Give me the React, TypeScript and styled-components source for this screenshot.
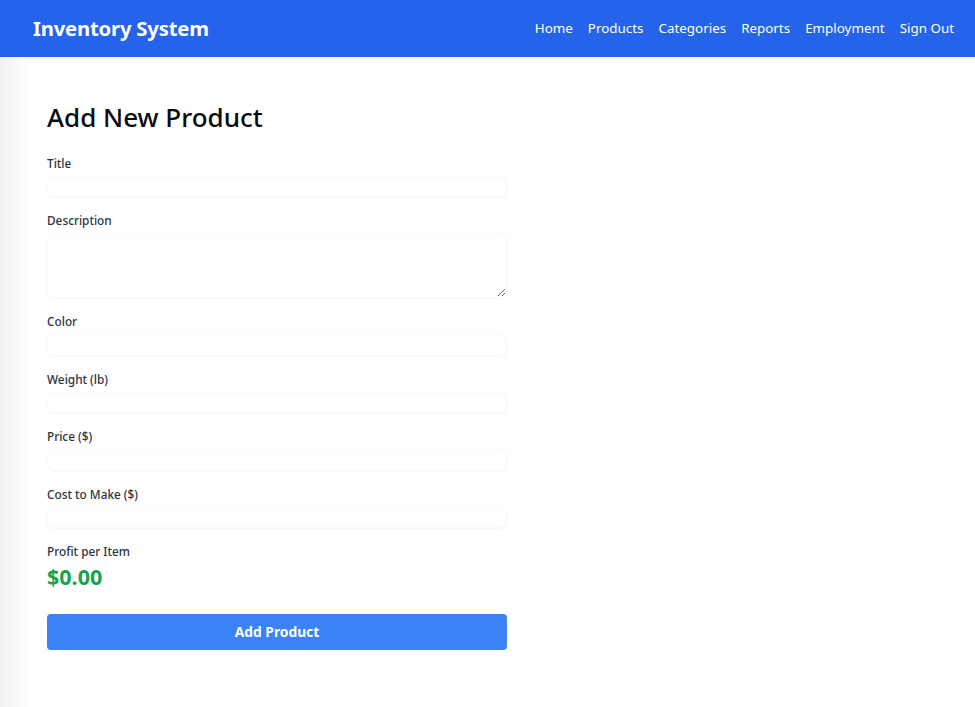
import React from 'react';

import styled, { createGlobalStyle } from 'styled-components';

const GlobalStyle = createGlobalStyle`
  html,
  body {
    margin: 0;
    padding: 0;
    background: #ffffff;
    font-family: 'Noto Sans', 'Open Sans', sans-serif;
  }

  * {
    box-sizing: border-box;
  }
`;

let Page = styled.div`
  min-height: 100vh;
  display: flex;
  flex-direction: column;
  background: linear-gradient(to right, #f1f1f1 0, #fafafa 18px, #ffffff 34px);
`;

let Header = styled.header`
  height: 57px;
  background-color: #2563eb;
  color: white;

  display: flex;
  align-items: center;
  justify-content: space-between;

  padding: 0 21px 1px 33px;
`;

let Brand = styled.span`
  font-size: 20.3px;
  font-weight: 700;
  letter-spacing: -0.2px;
`;

let Nav = styled.nav`
  display: flex;
  gap: 15px;
`;

let NavLink = styled.a`
  color: white;
  text-decoration: none;
  font-size: 13.4px;

  &:hover {
    cursor: pointer;
    text-decoration: underline;
  }
`;

let Main = styled.main`
  padding: 42px 47px 40px;
  width: 554px;
`;

let Heading = styled.h1`
  margin: 0 0 18px;
  font-size: 26px;
  line-height: 36px;
  font-weight: 500;
  color: #0b0b0b;
`;

let Form = styled.form`
  display: flex;
  flex-direction: column;
  gap: 13px;
`;

let Field = styled.div`
  display: flex;
  flex-direction: column;
`;

let Label = styled.label`
  font-size: 11.8px;
  line-height: 20px;
  font-weight: 500;
  color: #2b3440;
  margin-bottom: 3px;
`;

let Input = styled.input`
  height: 21.4px;
  width: 100%;
  border: 1px solid #fafafa;
  border-radius: 6px;
  box-shadow: 0 1px 2px rgba(0, 0, 0, 0.04);
  background: white;
  padding: 0 8px;
  font: inherit;
  font-size: 13px;
  outline: none;
`;

let TextArea = styled.textarea`
  height: 65px;
  width: 100%;
  border: 1px solid #fafafa;
  border-radius: 6px;
  box-shadow: 0 1px 2px rgba(0, 0, 0, 0.04);
  background: white;
  padding: 4px 8px;
  font: inherit;
  font-size: 13px;
  outline: none;
  resize: vertical;
  display: block;
`;

let Profit = styled.div`
  font-size: 21.5px;
  line-height: 28px;
  font-weight: 700;
  color: #16a34a;
  margin-top: -1px;
`;

let SubmitButton = styled.button`
  margin-top: 10px;
  height: 36px;
  width: 100%;
  border: none;
  border-radius: 4px;
  background-color: #3b82f6;
  color: white;
  font: inherit;
  font-size: 13.8px;
  font-weight: 700;

  &:hover {
    cursor: pointer;
    background-color: #2f74e8;
  }
`;

const navItems = ['Home', 'Products', 'Categories', 'Reports', 'Employment', 'Sign Out'];

const fields: { label: string; multiline?: boolean }[] = [
  { label: 'Title' },
  { label: 'Description', multiline: true },
  { label: 'Color' },
  { label: 'Weight (lb)' },
  { label: 'Price ($)' },
  { label: 'Cost to Make ($)' },
];

const App: React.FC = () => {
  return (
    <>
      <GlobalStyle />
      <Page>
        <Header>
          <Brand>Inventory System</Brand>
          <Nav>
            {navItems.map((item) => (
              <NavLink key={item}>{item}</NavLink>
            ))}
          </Nav>
        </Header>
        <Main>
          <Heading>Add New Product</Heading>
          <Form onSubmit={(e) => e.preventDefault()}>
            {fields.map((f) => (
              <Field key={f.label}>
                <Label>{f.label}</Label>
                {f.multiline ? <TextArea /> : <Input />}
              </Field>
            ))}
            <Field>
              <Label>Profit per Item</Label>
              <Profit>$0.00</Profit>
            </Field>
            <SubmitButton type="submit">Add Product</SubmitButton>
          </Form>
        </Main>
      </Page>
    </>
  );
};

export default App;
